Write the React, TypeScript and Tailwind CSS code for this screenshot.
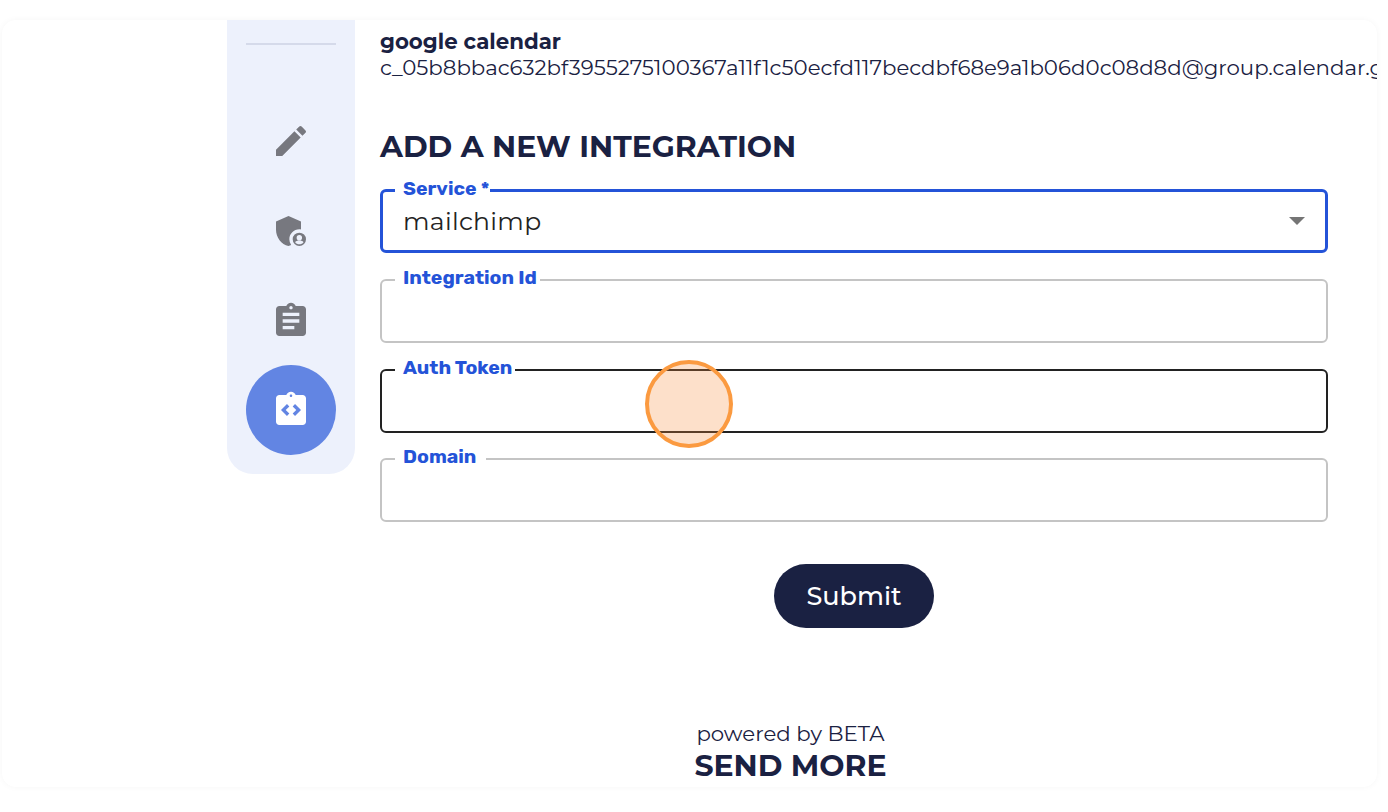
const montserrat = "font-['Montserrat','Inter','Noto_Sans',sans-serif]";
const labelFont = "font-['Rubik','DejaVu_Sans',sans-serif]";

function PencilIcon() {
  return (
    <svg viewBox="0 0 24 24" className="h-10 w-10 fill-[#77787f]">
      <path d="M3 21v-3.75L14.06 6.19l3.75 3.75L6.75 21H3zM20.71 7.04a1 1 0 0 0 0-1.41l-2.34-2.34a1 1 0 0 0-1.41 0l-1.83 1.83 3.75 3.75 1.83-1.83z" />
    </svg>
  );
}

function ShieldIcon() {
  return (
    <svg viewBox="0 0 24 24" className="h-10 w-10 fill-[#77787f]">
      <path d="M17 11c.34 0 .67.04 1 .09V6.27L10.5 3 3 6.27v4.91c0 4.54 3.2 8.79 7.5 9.82.55-.13 1.08-.32 1.6-.55A6 6 0 0 1 11 17c0-3.31 2.69-6 6-6z" />
      <path d="M17 13a4 4 0 1 0 0 8 4 4 0 0 0 0-8zm0 1.38a1.62 1.62 0 1 1 0 3.24 1.62 1.62 0 0 1 0-3.24zm0 5.62c-1 0-1.96-.5-2.5-1.28.05-.72 1.5-1.09 2.5-1.09s2.45.37 2.5 1.09C18.96 19.5 18 20 17 20z" />
    </svg>
  );
}

function ClipboardIcon() {
  return (
    <svg viewBox="0 0 24 24" className="h-10 w-10 fill-[#77787f]">
      <path d="M19 3h-4.18C14.4 1.84 13.3 1 12 1s-2.4.84-2.82 2H5c-1.1 0-2 .9-2 2v14c0 1.1.9 2 2 2h14c1.1 0 2-.9 2-2V5c0-1.1-.9-2-2-2zm-7 0c.55 0 1 .45 1 1s-.45 1-1 1-1-.45-1-1 .45-1 1-1zm2 14H7v-2h7v2zm3-4H7v-2h10v2zm0-4H7V7h10v2z" />
    </svg>
  );
}

function CodeClipboardIcon() {
  return (
    <svg viewBox="0 0 24 24" className="h-10 w-10 fill-white">
      <path d="M19 3h-4.18C14.4 1.84 13.3 1 12 1s-2.4.84-2.82 2H5c-1.1 0-2 .9-2 2v14c0 1.1.9 2 2 2h14c1.1 0 2-.9 2-2V5c0-1.1-.9-2-2-2zm-7-.25c.41 0 .75.34.75.75s-.34.75-.75.75-.75-.34-.75-.75.34-.75.75-.75zM11 14.17l-1.41 1.42L6 12l3.59-3.59L11 9.83 8.83 12 11 14.17zm3.41 1.42L13 14.17 15.17 12 13 9.83l1.41-1.42L18 12l-3.59 3.59z" />
    </svg>
  );
}

function Field({ label, tone, gap }: { label: string; tone: string; gap: string }) {
  return (
    <div className={`relative h-16 w-full rounded-[6px] border-2 ${tone}`}>
      <span className={`absolute -top-[14px] left-[13px] bg-white pl-[8px] ${labelFont} text-[19.5px] leading-[22px] font-bold text-[#2453d8] ${gap}`}>
        {label}
      </span>
    </div>
  );
}

export default function App() {
  return (
    <div className="h-[812px] w-[1388px] overflow-hidden bg-white pl-[2px] pt-[20px] text-[#1a2142]">
      <div className="flex h-[767px] w-[1375px] overflow-hidden rounded-[14px] bg-white shadow-[0_0_6px_rgba(0,0,0,0.04)]">
        <div className="ml-[225px] flex h-[454px] w-[128px] shrink-0 flex-col items-center rounded-b-[26px] bg-[#edf1fc] px-[19px] pt-[23px]">
          <div className="h-0.5 w-full shrink-0 bg-[#d5daea]" />
          <div className="mt-[51px] flex h-[90px] shrink-0 items-center justify-center"><PencilIcon /></div>
          <div className="flex h-[90px] shrink-0 items-center justify-center"><ShieldIcon /></div>
          <div className="flex h-[89px] shrink-0 items-center justify-center"><ClipboardIcon /></div>
          <div className="flex h-[90px] w-[90px] shrink-0 items-center justify-center rounded-full bg-[#6285e3]"><CodeClipboardIcon /></div>
        </div>
        <div className={`ml-[25px] w-[948px] shrink-0 ${montserrat}`}>
          <div className="pt-[9px] text-[21.3px] leading-[24px] font-bold whitespace-nowrap">google calendar</div>
          <div className="text-[21.3px] leading-[28px] font-normal whitespace-nowrap">
            c_05b8bbac632bf3955275100367a11f1c50ecfd117becdbf68e9a1b06d0c08d8d@group.calendar.g
          </div>
          <h1 className="mt-[47px] text-[29.9px] leading-[38px] font-bold">ADD A NEW INTEGRATION</h1>
          <div className="mt-[23px] flex flex-col gap-[26px]">
            <div className="relative flex h-[64px] items-center justify-between rounded-[6px] border-[3px] border-[#2453d8] pl-[20px] pr-[20px]">
              <span className={`absolute -top-[14px] left-[12px] bg-white pl-[8px] pr-[1px] ${labelFont} text-[19.5px] leading-[22px] font-bold text-[#2453d8]`}>Service *</span>
              <span className="text-[25px] leading-[30px] tracking-[0.3px] text-[#232323]">mailchimp</span>
              <span className="h-0 w-0 border-x-[8px] border-t-[8px] border-x-transparent border-t-[#757575]" />
            </div>
            <Field label="Integration Id" tone="border-[#c4c4c4]" gap="pr-[3px]" />
            <Field label="Auth Token" tone="border-[#222222]" gap="pr-[3px]" />
            <div className="-mt-px">
              <Field label="Domain" tone="border-[#c4c4c4]" gap="pr-[10px]" />
            </div>
          </div>
          <div className="mt-[42px] flex justify-center">
            <button className="h-16 w-40 rounded-[32px] bg-[#1a2142] text-[25.5px] font-medium text-white">Submit</button>
          </div>
          <div className="mt-[90px] flex flex-col items-center pr-[127px]">
            <div className="text-[21.3px] leading-[30px] font-normal">powered by BETA</div>
            <div className="text-[29.9px] leading-[36px] font-bold">SEND MORE</div>
          </div>
        </div>
      </div>
      <div className="absolute left-[645px] top-[360px] h-[88px] w-[88px] rounded-full border-4 border-[#fb9a40] bg-[#f98c3a]/27" />
    </div>
  );
}
